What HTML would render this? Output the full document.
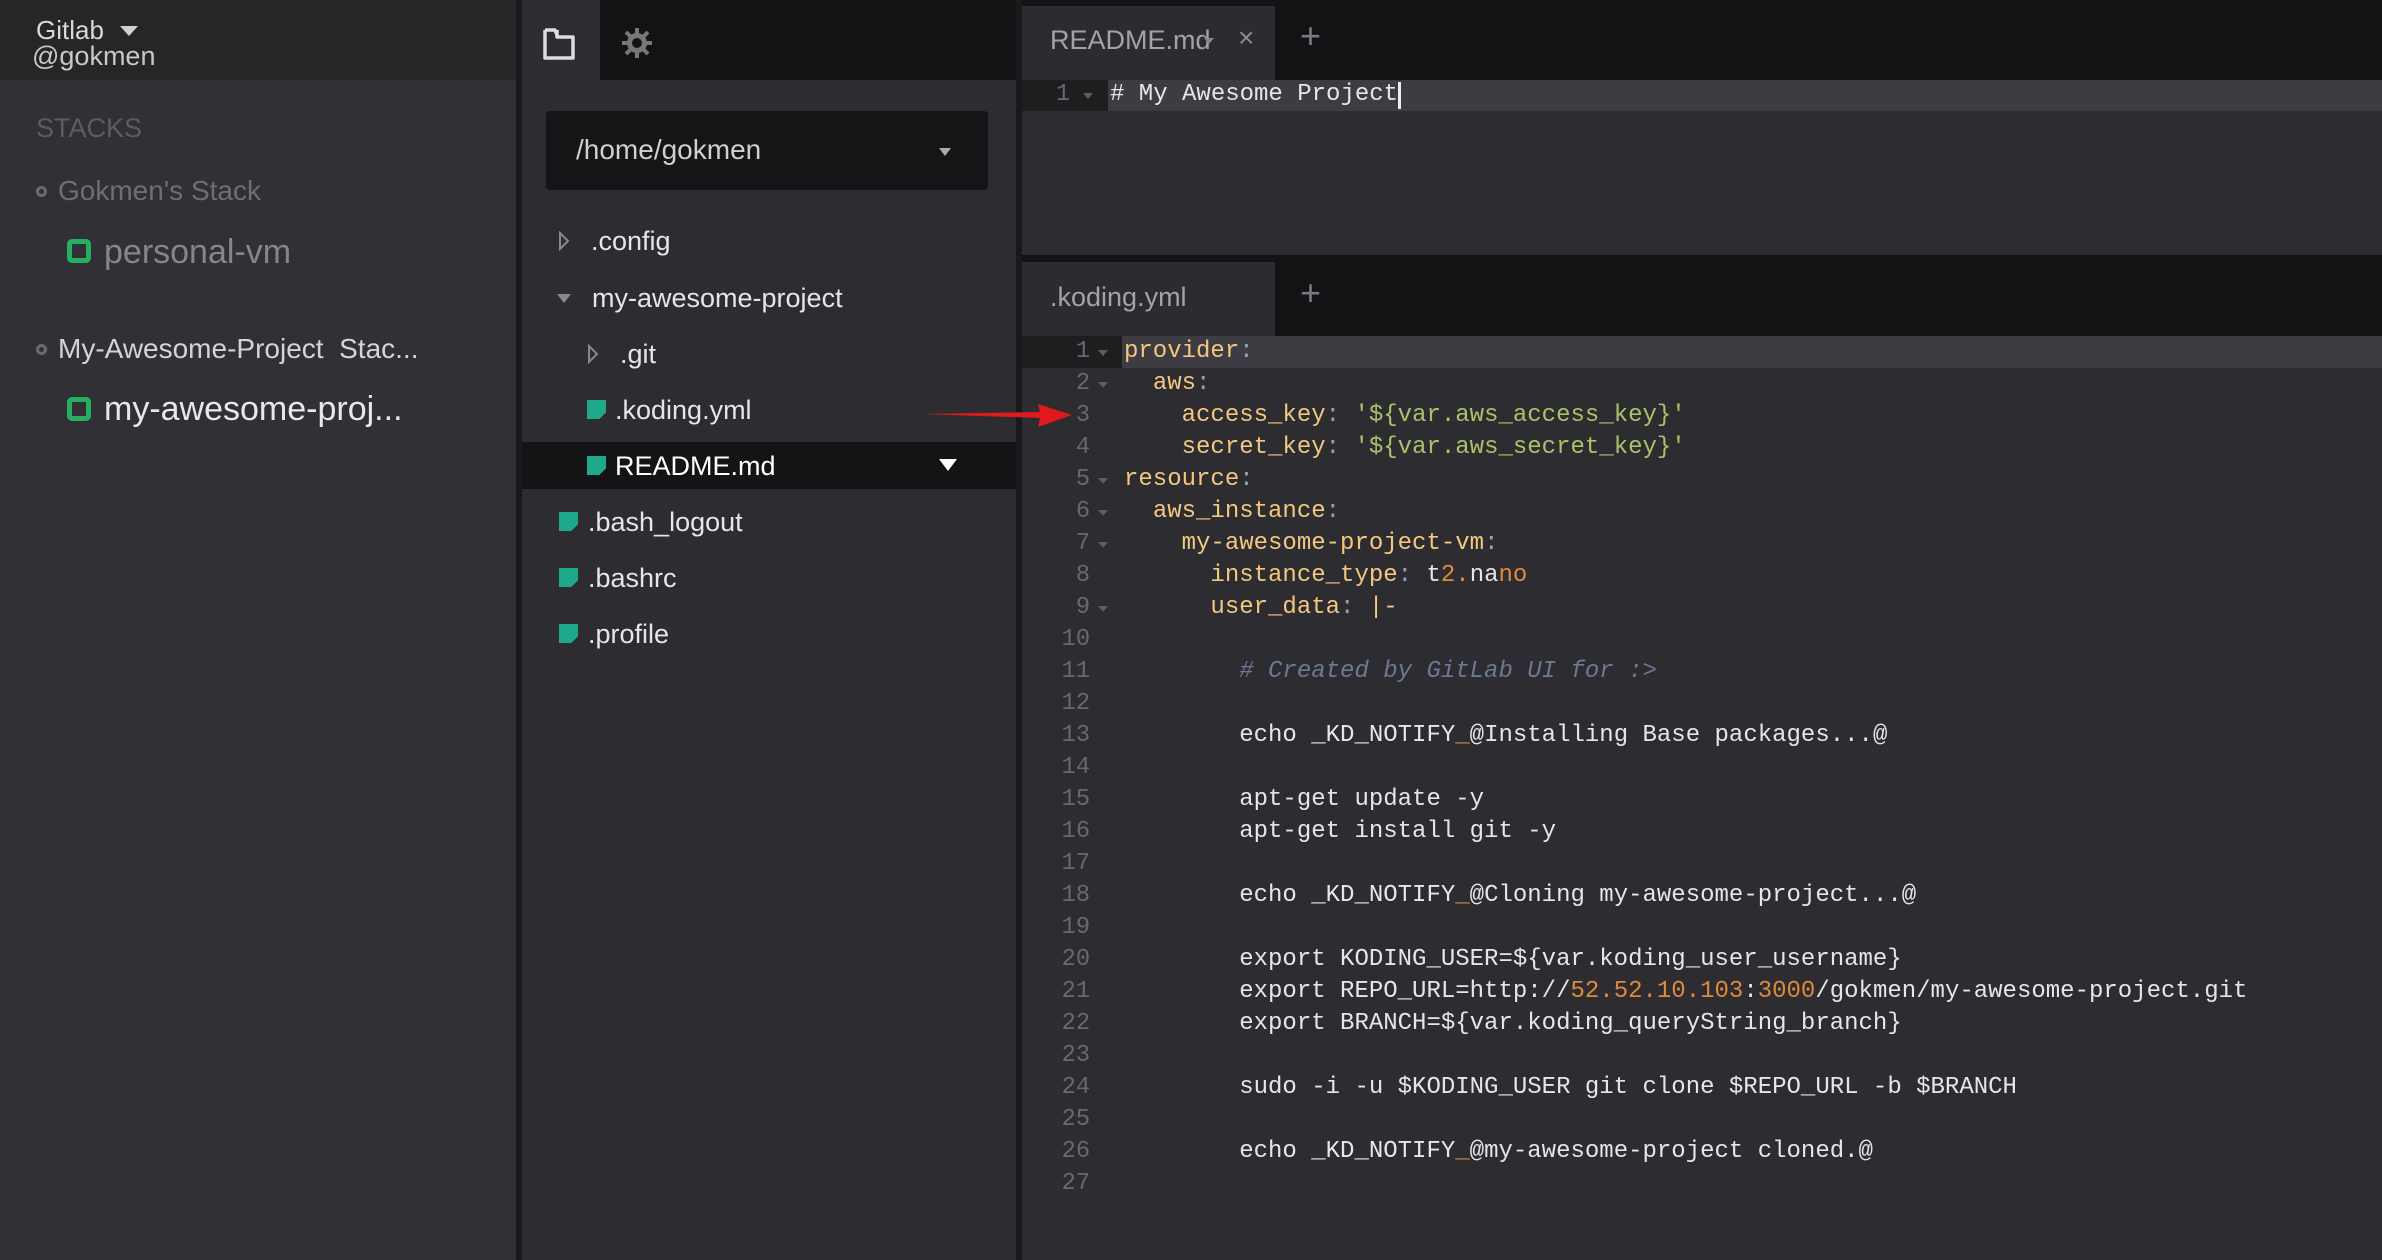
<!DOCTYPE html>
<html><head><meta charset="utf-8"><style>
*{margin:0;padding:0;box-sizing:border-box}
body{width:2382px;height:1260px;background:#2c2c31;position:relative;overflow:hidden;font-family:"Liberation Sans Narrow","Liberation Sans",sans-serif}
.a{position:absolute;white-space:pre}
.side{left:0;top:0;width:516px;height:1260px;background:#303036}
.sh{left:0;top:0;width:516px;height:80px;background:#262629}
.t{font-size:27px;line-height:32px}
.code{font-family:"Liberation Mono",monospace;font-size:24px;line-height:32px;color:#e6e6e6}
.k{color:#f3c77f}.s{color:#a9c36a}.c{color:#9aa0b8}.n{color:#de8a3c}.cm{color:#6c7894;font-style:italic}
.ln{font-family:"Liberation Mono",monospace;font-size:23.6px;line-height:32px;color:#68686f;width:60px;text-align:right;left:1030px}
.fold{width:0;height:0;border-left:5px solid transparent;border-right:5px solid transparent;border-top:6px solid #5c5c63;position:absolute}
.fi{position:absolute;width:19px;height:19px;background:#1fa98b;clip-path:polygon(0 0,100% 0,100% 65%,65% 100%,0 100%)}
.vm{position:absolute;width:24px;height:24px;border:5px solid #25b061;border-radius:5px}
</style></head><body>
<div class="a side"></div>
<div class="a sh"></div>
<div class="a t" style="left:36px;top:14px;color:#d8d8d8;font-size:26px">Gitlab</div>
<div class="a" style="left:120px;top:26px;width:0;height:0;border-left:9px solid transparent;border-right:9px solid transparent;border-top:10px solid #d0d0d0"></div>
<div class="a t" style="left:32px;top:40px;color:#c8c8c8;font-size:27px">@gokmen</div>
<div class="a t" style="left:36px;top:112px;color:#5c5c64;font-size:27px">STACKS</div>
<div class="a" style="left:36px;top:186px;width:11px;height:11px;border:3px solid #6a6a72;border-radius:50%"></div>
<div class="a t" style="left:58px;top:175px;color:#6e6e76;font-size:28px">Gokmen's Stack</div>
<div class="vm" style="left:67px;top:239px"></div>
<div class="a t" style="left:104px;top:232px;color:#85858c;font-size:34px;line-height:40px">personal-vm</div>
<div class="a" style="left:36px;top:344px;width:11px;height:11px;border:3px solid #6a6a72;border-radius:50%"></div>
<div class="a t" style="left:58px;top:333px;color:#d4d4d4;font-size:28px">My-Awesome-Project  Stac...</div>
<div class="vm" style="left:67px;top:397px"></div>
<div class="a t" style="left:104px;top:389px;color:#e8e8e8;font-size:34px;line-height:40px">my-awesome-proj...</div>

<div class="a" style="left:516px;top:0;width:6px;height:1260px;background:#19191b"></div>
<div class="a" style="left:522px;top:0;width:494px;height:80px;background:#131315"></div>
<div class="a" style="left:522px;top:0;width:78px;height:80px;background:#2c2c31"></div>
<svg class="a" style="left:542px;top:27px" width="34" height="34" viewBox="0 0 34 34"><path d="M3 3h10l2 5h0v0 M3 3v28h28V10H15V3" fill="none" stroke="#ddd" stroke-width="3.5" stroke-linejoin="round"/></svg>
<svg class="a" style="left:620px;top:26px" width="34" height="34" viewBox="0 0 34 34"><g stroke="#777" stroke-width="4"><line x1="17" y1="2" x2="17" y2="32"/><line x1="2" y1="17" x2="32" y2="17"/><line x1="6" y1="6" x2="28" y2="28"/><line x1="28" y1="6" x2="6" y2="28"/></g><circle cx="17" cy="17" r="10" fill="#777"/><circle cx="17" cy="17" r="5" fill="#131315"/></svg>
<div class="a" style="left:546px;top:111px;width:442px;height:79px;background:#151517;border-radius:4px"></div>
<div class="a t" style="left:576px;top:134px;color:#d0d0d0;font-size:28px">/home/gokmen</div>
<div class="a" style="left:939px;top:148px;width:0;height:0;border-left:6px solid transparent;border-right:6px solid transparent;border-top:8px solid #aaa"></div>

<div class="a" style="left:522px;top:442px;width:494px;height:47px;background:#141416"></div>
<svg class="a" style="left:558px;top:231px" width="12" height="20"><path d="M2 2L10 10L2 18Z" fill="none" stroke="#888" stroke-width="2"/></svg>
<div class="a t" style="left:591px;top:225px;color:#e6e6e6">.config</div>
<div class="a" style="left:557px;top:294px;width:0;height:0;border-left:7px solid transparent;border-right:7px solid transparent;border-top:9px solid #888"></div>
<div class="a t" style="left:592px;top:282px;color:#e6e6e6">my-awesome-project</div>
<svg class="a" style="left:587px;top:344px" width="12" height="20"><path d="M2 2L10 10L2 18Z" fill="none" stroke="#888" stroke-width="2"/></svg>
<div class="a t" style="left:620px;top:338px;color:#e6e6e6">.git</div>
<div class="fi" style="left:587px;top:400px"></div>
<div class="a t" style="left:615px;top:394px;color:#e6e6e6">.koding.yml</div>
<div class="fi" style="left:587px;top:456px"></div>
<div class="a t" style="left:615px;top:450px;color:#ffffff">README.md</div>
<div class="a" style="left:939px;top:459px;width:0;height:0;border-left:9px solid transparent;border-right:9px solid transparent;border-top:12px solid #fff"></div>
<div class="fi" style="left:559px;top:512px"></div>
<div class="a t" style="left:588px;top:506px;color:#e6e6e6">.bash_logout</div>
<div class="fi" style="left:559px;top:568px"></div>
<div class="a t" style="left:588px;top:562px;color:#e6e6e6">.bashrc</div>
<div class="fi" style="left:559px;top:624px"></div>
<div class="a t" style="left:588px;top:618px;color:#e6e6e6">.profile</div>

<div class="a" style="left:1016px;top:0;width:6px;height:1260px;background:#19191b"></div>
<div class="a" style="left:1022px;top:0;width:1360px;height:80px;background:#131315"></div>
<div class="a" style="left:1022px;top:6px;width:253px;height:74px;background:#2b2b30"></div>
<div class="a t" style="left:1050px;top:24px;color:#a2a2aa;font-size:27px">README.md</div>
<div class="a" style="left:1204px;top:38px;width:0;height:0;border-left:5px solid transparent;border-right:5px solid transparent;border-top:6px solid #888"></div>
<div class="a t" style="left:1238px;top:22px;color:#8a8a90;font-size:28px">×</div>
<div class="a t" style="left:1300px;top:20px;color:#7a7a80;font-size:36px">+</div>
<div class="a" style="left:1022px;top:80px;width:1360px;height:31px;background:#3c3c42"></div>
<div class="a" style="left:1022px;top:80px;width:86px;height:31px;background:#1e1e21"></div>
<div class="a ln" style="top:79px;left:1010px">1</div>
<div class="fold" style="left:1083px;top:93px"></div>
<div class="a code" style="left:1110px;top:79px">#&nbsp;My Awesome Project</div>
<div class="a" style="left:1398px;top:82px;width:3px;height:27px;background:#eee"></div>

<div class="a" style="left:1022px;top:255px;width:1360px;height:81px;background:#131315"></div>
<div class="a" style="left:1022px;top:262px;width:253px;height:74px;background:#2b2b30"></div>
<div class="a t" style="left:1050px;top:281px;color:#a2a2aa;font-size:27px">.koding.yml</div>
<div class="a t" style="left:1300px;top:277px;color:#7a7a80;font-size:36px">+</div>
<div class="a" style="left:1022px;top:336px;width:1360px;height:32px;background:#3c3c42"></div>
<div class="a" style="left:1022px;top:336px;width:100px;height:32px;background:#1e1e21"></div>
<div class="a ln" style="top:336px">1<br>2<br>3<br>4<br>5<br>6<br>7<br>8<br>9<br>10<br>11<br>12<br>13<br>14<br>15<br>16<br>17<br>18<br>19<br>20<br>21<br>22<br>23<br>24<br>25<br>26<br>27</div>
<div class="fold" style="left:1098px;top:350px"></div>
<div class="fold" style="left:1098px;top:382px"></div>
<div class="fold" style="left:1098px;top:478px"></div>
<div class="fold" style="left:1098px;top:510px"></div>
<div class="fold" style="left:1098px;top:542px"></div>
<div class="fold" style="left:1098px;top:606px"></div>
<div class="a code" style="left:1124px;top:336px"><span class="k">provider</span><span class="c">:</span>
  <span class="k">aws</span><span class="c">:</span>
    <span class="k">access_key</span><span class="c">:</span> <span class="s">'${var.aws_access_key}'</span>
    <span class="k">secret_key</span><span class="c">:</span> <span class="s">'${var.aws_secret_key}'</span>
<span class="k">resource</span><span class="c">:</span>
  <span class="k">aws_instance</span><span class="c">:</span>
    <span class="k">my-awesome-project-vm</span><span class="c">:</span>
      <span class="k">instance_type</span><span class="c">:</span> t<span class="n">2.</span>na<span class="n">no</span>
      <span class="k">user_data</span><span class="c">:</span> <span class="k">|-</span>

        <span class="cm"># Created by GitLab UI for :&gt;</span>

        echo _KD_NOTIFY<span class="n">_</span>@Installing Base packages...@

        apt-get update -y
        apt-get install git -y

        echo _KD_NOTIFY<span class="n">_</span>@Cloning my-awesome-project...@

        export KODING_USER=${var.koding_user_username}
        export REPO_URL=http://<span class="n">52.52.10.103</span>:<span class="n">3000</span>/gokmen/my-awesome-project.git
        export BRANCH=${var.koding_queryString_branch}

        sudo -i -u $KODING_USER git clone $REPO_URL -b $BRANCH

        echo _KD_NOTIFY<span class="n">_</span>@my-awesome-project cloned.@
</div>
<svg class="a" style="left:920px;top:400px" width="155" height="30"><path d="M2 14L120 12L118 4L152 15L118 27L120 18Z" fill="#e0191b"/></svg>
</body></html>
